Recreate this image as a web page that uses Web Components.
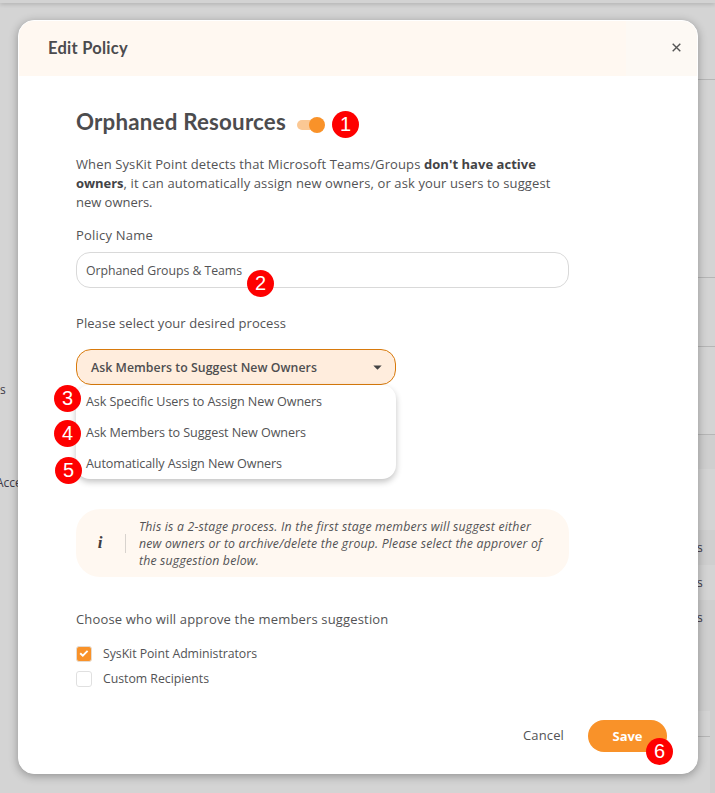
<!DOCTYPE html>
<html lang="en">
<head>
<meta charset="utf-8">
<title>Edit Policy</title>
<style>
html,body{margin:0;height:100%;overflow:hidden}
body{font-family:"Open Sans","Noto Sans",sans-serif;color:#535355;font-size:13px}
</style>
</head>
<body>
<policy-page></policy-page>
<script>
const define = (name, html, setup) => {
  const t = document.createElement('template');
  t.innerHTML = html;
  customElements.define(name, class extends HTMLElement {
    connectedCallback() {
      if (this.shadowRoot) return;
      this.attachShadow({mode: 'open'}).append(t.content.cloneNode(true));
      if (setup) setup(this, this.shadowRoot);
    }
  });
};

// A run of text on one line whose tracking is set so that it spans the width in "w".
define('text-run', `<style>:host{display:inline-block;white-space:nowrap;vertical-align:top}span{display:inline-block;white-space:pre}</style><span><slot></slot></span>`,
  (el, root) => {
    const s = root.querySelector('span');
    const w = +el.getAttribute('w');
    const n = el.textContent.length;
    if (w && n) s.style.letterSpacing = ((w - s.getBoundingClientRect().width) / n).toFixed(4) + 'px';
  });

define('step-badge', `<style>:host{position:absolute;z-index:5;width:27px;height:27px;border-radius:50%;background:#fe0000;color:#fff;font:20px/27px "Liberation Sans",Arial,sans-serif;text-align:center}</style><slot></slot>`);

define('toggle-switch', `<style>:host{display:block;width:28px;height:16px}svg{display:block}</style>
<svg width="28" height="16"><rect x="0" y="3" width="26" height="10" rx="5" fill="#fbc894"/><circle cx="20" cy="8" r="8" fill="#f99229"/></svg>`);

define('text-field', `<style>:host{display:flex;align-items:center;box-sizing:border-box;height:36px;border:1px solid #d9d9d9;border-radius:14px;padding:0 9px;font-size:12.3px;background:#fff}</style><slot></slot>`);

define('select-box', `<style>:host{display:block;position:relative;width:320px;height:36px}
.head{box-sizing:border-box;height:36px;display:flex;align-items:center;justify-content:space-between;border:1px solid #d87a0c;border-radius:15px;background:#ffeddd;padding:0 13px 0 14px;font-weight:600;font-size:12.3px;color:#4e4e50}
.menu{position:absolute;top:36px;left:0;width:320px;height:94px;box-sizing:border-box;padding-top:1px;background:#fff;border-radius:14px;box-shadow:0 3px 6px rgba(0,0,0,.24)}
</style><div class="head"><slot name="value"></slot><svg width="9" height="5"><path d="M.3.4H8.7L4.5 4.7Z" fill="#444"/></svg></div><div class="menu"><slot></slot></div>`);

define('menu-option', `<style>:host{display:flex;height:31px;align-items:center;padding-left:10px;font-size:12.6px}</style><slot></slot>`);

define('info-note', `<style>:host{display:flex;align-items:center;box-sizing:border-box;height:68px;background:#fff8f1;border-radius:24px;font-style:italic;font-size:12.3px;line-height:17px}
.i{width:48px;padding-right:1px;text-align:center;font:italic bold 17px/20px "Liberation Serif",serif;color:#3f3d40;flex:none}
.rule{width:1px;height:19px;background:#d8d3ce;margin-right:13px}
.t{display:flex;flex-direction:column;align-items:flex-start}</style><div class="i">i</div><div class="rule"></div><div class="t"><slot></slot></div>`);

define('check-item', `<style>:host{display:flex;align-items:center;height:25px;font-size:12.3px;gap:11px}
svg{display:block;flex:none}.on{display:none}:host([checked]) .on{display:block}:host([checked]) .off{display:none}</style>
<svg class="on" width="16" height="16"><rect x=".5" y=".5" width="15" height="15" rx="2.5" fill="#f99229" stroke="#e5dcd2"/><path d="M4.2 7.2 6.8 9.7 11.6 4.9" fill="none" stroke="#fff" stroke-width="1.9"/></svg>
<svg class="off" width="16" height="16"><rect x=".5" y=".5" width="15" height="15" rx="2.5" fill="#fff" stroke="#e0e0e0"/></svg><slot></slot>`);

define('save-button', `<style>:host{display:flex;align-items:center;justify-content:center;width:79px;height:32px;border-radius:16px;background:#f99229;color:#fff;font-weight:700;font-size:13px}</style><slot></slot>`);

define('page-backdrop', `<style>:host{position:absolute;inset:0;background:#d4d4d4;overflow:hidden;font-size:12px;color:#3e3a48}
.top{height:3px;background:#d3d3d3;box-shadow:0 1px 4px rgba(0,0,0,.22)}
i,b,span{position:absolute;display:block}i{left:690px;right:0;height:1px;background:#b6b6b6}b{left:690px;right:0;background:#cfcfcf}span{font-size:12px;line-height:16px;white-space:nowrap}</style>
<div class="top"></div>
<b style="top:435px;height:34px"></b><b style="top:530px;height:35px"></b><b style="top:600px;height:111px"></b><b style="top:711px;bottom:0;left:710px"></b>
<i style="top:79px"></i><i style="top:277px"></i><i style="top:346px"></i><i style="top:434px"></i><i style="top:736px;right:5px"></i>
<span style="left:0;top:382px">s</span><span style="left:-4px;top:475px">Acce</span>
<span style="left:697px;top:540px">s</span><span style="left:697px;top:575px">s</span><span style="left:697px;top:610px">s</span>`);

define('modal-dialog', `<style>:host{position:absolute;left:18px;top:20px;width:680px;height:754px;box-sizing:border-box;border:1px solid #fff;border-radius:16px;background:#fff;box-shadow:0 2px 10px rgba(0,0,0,.32);display:flex;flex-direction:column}
header{height:55px;box-sizing:border-box;flex:none;display:flex;align-items:center;justify-content:space-between;padding:0 17px 2px 29px;border-radius:15px 15px 0 0;background:linear-gradient(90deg,#fff8f1 607px,#fdf9f4 607px);font:bold 16.5px/22px Lato,sans-serif;color:#4b4b4e}
header svg{margin-right:-1px}
main{flex:1;padding:36px 128px 0 57px}footer{display:flex;align-items:center;justify-content:flex-end;gap:24px;padding:0 30px 21px 0}</style>
<header><slot name="title"></slot><svg width="9" height="9"><path d="M.7.7 8.3 8.3M8.3.7.7 8.3" stroke="#555" stroke-width="1.4"/></svg></header><main><slot></slot></main><footer><slot name="footer"></slot></footer>`);

define('policy-page', `<style>:host{display:block;position:relative;width:715px;height:793px;overflow:hidden}
.h{display:flex;align-items:center;gap:11px;height:22px;font:bold 22.3px/20px Lato,sans-serif;color:#4c4c4e}
.h>text-run{height:22px}
.h toggle-switch{margin-top:3px}
.p{display:flex;flex-direction:column;margin-top:21px;line-height:19px;font-size:13px}.p div{height:19px;display:flex}
.lab{height:20px;line-height:20px;font-size:13px}b{font-weight:700;color:#434346}
.c{font-size:13px;padding-bottom:2px}</style>
<page-backdrop></page-backdrop>
<modal-dialog>
<text-run slot="title" w="80">Edit Policy</text-run>
<div class="h"><text-run w="210">Orphaned Resources</text-run><toggle-switch></toggle-switch></div>
<div class="p"><div><text-run w="348">When SysKit Point detects that Microsoft Teams/Groups </text-run><b><text-run w="112">don't have active</text-run></b></div>
<div><b><text-run w="47.5">owners</text-run></b><text-run w="427">, it can automatically assign new owners, or ask your users to suggest</text-run></div>
<div><text-run w="76.5">new owners.</text-run></div></div>
<div class="lab" style="margin-top:13px"><text-run w="77">Policy Name</text-run></div>
<text-field style="margin-top:7px"><text-run w="156">Orphaned Groups &amp; Teams</text-run></text-field>
<div class="lab" style="margin-top:25px"><text-run w="210">Please select your desired process</text-run></div>
<select-box style="margin-top:16px"><text-run slot="value" w="226">Ask Members to Suggest New Owners</text-run>
<menu-option><text-run w="236">Ask Specific Users to Assign New Owners</text-run></menu-option>
<menu-option><text-run w="220">Ask Members to Suggest New Owners</text-run></menu-option>
<menu-option><text-run w="196">Automatically Assign New Owners</text-run></menu-option></select-box>
<info-note style="margin-top:124px"><text-run w="392">This is a 2-stage process. In the first stage members will suggest either</text-run><text-run w="403">new owners or to archive/delete the group. Please select the approver of</text-run><text-run w="120">the suggestion below.</text-run></info-note>
<div class="lab" style="margin-top:32px"><text-run w="312.5">Choose who will approve the members suggestion</text-run></div>
<check-item checked style="margin-top:12px"><text-run w="154">SysKit Point Administrators</text-run></check-item>
<check-item><text-run w="106">Custom Recipients</text-run></check-item>
<text-run slot="footer" class="c" w="41">Cancel</text-run><save-button slot="footer"><text-run w="30">Save</text-run></save-button>
</modal-dialog>
<step-badge style="left:332px;top:111px">1</step-badge><step-badge style="left:247px;top:270px">2</step-badge>
<step-badge style="left:54px;top:385px">3</step-badge><step-badge style="left:54px;top:420px">4</step-badge><step-badge style="left:55px;top:457px">5</step-badge>
<step-badge style="left:646px;top:738px">6</step-badge>`);
</script>
</body>
</html>
